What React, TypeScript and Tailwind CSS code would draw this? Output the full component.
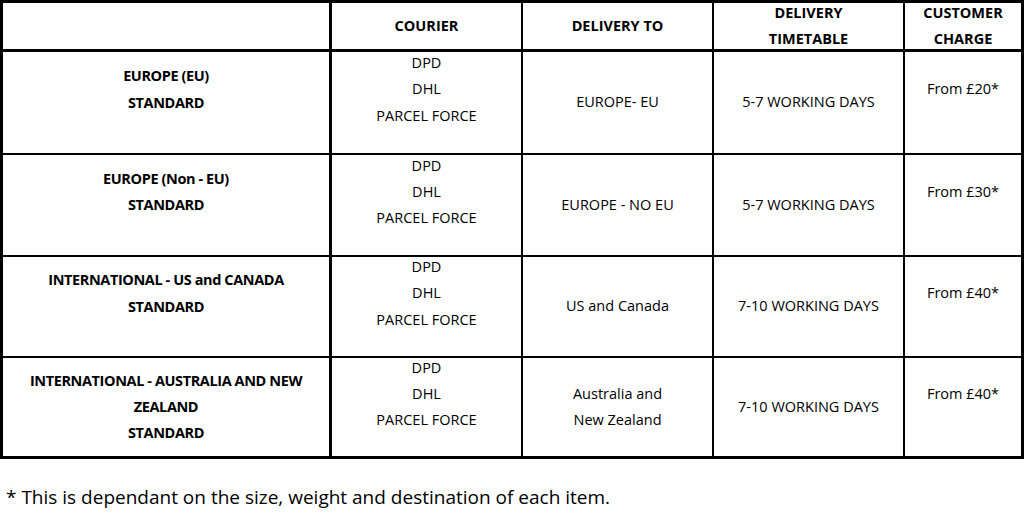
import React from 'react';

interface Row {
  region: string[];
  destination: string[];
  timetable: string;
  charge: string;
  regionOffset: boolean;
  height: string;
}

const rows: Row[] = [
  {
    region: ['EUROPE (EU)', 'STANDARD'],
    destination: ['EUROPE- EU'],
    timetable: '5-7 WORKING DAYS',
    charge: 'From £20*',
    regionOffset: true,
    height: 'h-[103px]',
  },
  {
    region: ['EUROPE (Non - EU)', 'STANDARD'],
    destination: ['EUROPE - NO EU'],
    timetable: '5-7 WORKING DAYS',
    charge: 'From £30*',
    regionOffset: true,
    height: 'h-[102px]',
  },
  {
    region: ['INTERNATIONAL - US and CANADA', 'STANDARD'],
    destination: ['US and Canada'],
    timetable: '7-10 WORKING DAYS',
    charge: 'From £40*',
    regionOffset: true,
    height: 'h-[101px]',
  },
  {
    region: ['INTERNATIONAL - AUSTRALIA AND NEW', 'ZEALAND', 'STANDARD'],
    destination: ['Australia and', 'New Zealand'],
    timetable: '7-10 WORKING DAYS',
    charge: 'From £40*',
    regionOffset: false,
    height: 'h-[98px]',
  },
];

const couriers = ['DPD', 'DHL', 'PARCEL FORCE'];

export default function App() {
  return (
    <div className="w-[1024px] h-[512px] bg-white text-black font-['Open_Sans',sans-serif] text-[14.5px] leading-[26.3px]">
      {/* Delivery table */}
      <div className="border-[3px] border-black grid grid-cols-[329px_191px_191px_191px_116px]">
        {/* Header */}
        <div className="h-[49px] border-b-[3px] border-r-[3px] border-black" />
        <div className="h-[49px] border-b-[3px] border-r-2 border-black flex items-center justify-center font-bold">
          COURIER
        </div>
        <div className="h-[49px] border-b-[3px] border-r-2 border-black flex items-center justify-center font-bold">
          DELIVERY TO
        </div>
        <div className="h-[49px] border-b-[3px] border-r-2 border-black flex flex-col items-center justify-center font-bold">
          <span>DELIVERY</span>
          <span>TIMETABLE</span>
        </div>
        <div className="h-[49px] border-b-[3px] border-black flex flex-col items-center justify-center font-bold">
          <span>CUSTOMER</span>
          <span>CHARGE</span>
        </div>

        {/* Body rows */}
        {rows.map((row, i) => {
          const last = i === rows.length - 1;
          const bottom = last ? '' : 'border-b-2';
          return (
            <React.Fragment key={i}>
              <div
                className={`${row.height} ${bottom} border-r-[3px] border-black flex flex-col items-center justify-center font-bold tracking-[-0.4px] ${row.regionOffset ? 'pb-[26px]' : ''}`}
              >
                {row.region.map((line) => (
                  <span key={line}>{line}</span>
                ))}
              </div>
              <div className={`${row.height} ${bottom} border-r-2 border-black flex flex-col items-center justify-center pb-[26px]`}>
                {couriers.map((c) => (
                  <span key={c}>{c}</span>
                ))}
              </div>
              <div className={`${row.height} ${bottom} border-r-2 border-black flex flex-col items-center justify-center`}>
                {row.destination.map((line) => (
                  <span key={line}>{line}</span>
                ))}
              </div>
              <div className={`${row.height} ${bottom} border-r-2 border-black flex items-center justify-center`}>
                {row.timetable}
              </div>
              <div className={`${row.height} ${bottom} border-black flex items-center justify-center pb-[26px]`}>
                {row.charge}
              </div>
            </React.Fragment>
          );
        })}
      </div>

      {/* Footnote */}
      <p className="mt-[26px] pl-[6px] text-[19px] leading-[24px]">
        * This is dependant on the size, weight and destination of each item.
      </p>
    </div>
  );
}
